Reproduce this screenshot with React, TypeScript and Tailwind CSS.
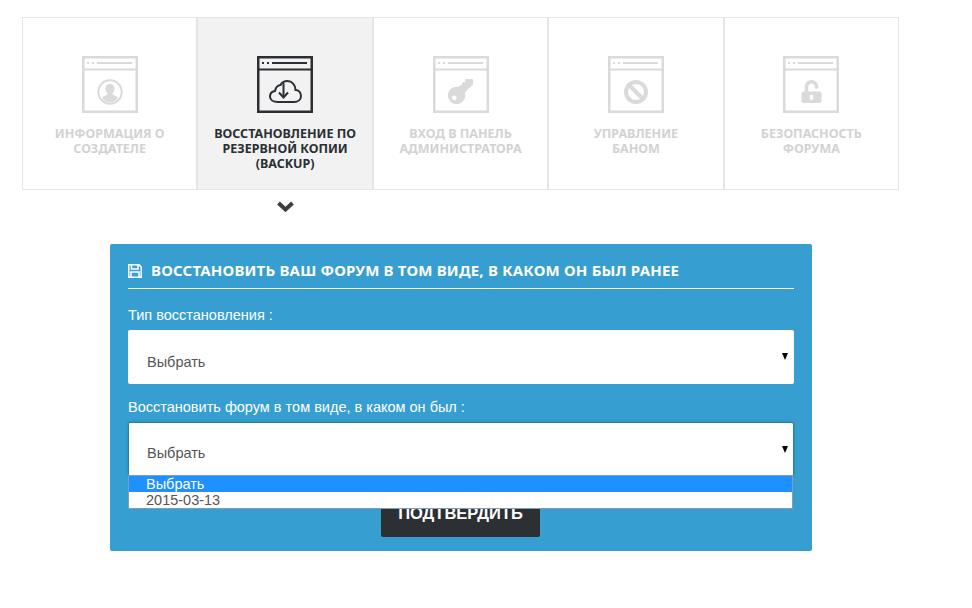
import React from 'react';
import { FaKey, FaUnlockAlt } from 'react-icons/fa';

const headingFont = "font-['Noto_Sans','DejaVu_Sans',sans-serif]";

// browser window frame shared by every step icon
const WindowIcon: React.FC<{ children: React.ReactNode; active?: boolean }> = ({ children, active }) => {
  const color = active ? '#2b2f33' : '#dadada';
  return (
    <div className="relative h-[57px] w-[56px]">
      <svg width="56" height="57" viewBox="0 0 56 57" fill="none">
        <rect x="1.25" y="1.25" width="53.5" height="54.5" stroke={color} strokeWidth="2.5" />
        <path d="M1 13.500H55" stroke={color} strokeWidth="2" />
        <path d="M5 7h2M10 7h2M15 7H50" stroke={color} strokeWidth="2" />
      </svg>
      <div className="absolute inset-x-0 top-[14px] bottom-0 flex items-center justify-center">{children}</div>
    </div>
  );
};

const UserCircle = () => (
  <svg width="26" height="26" viewBox="0 0 26 26">
    <circle cx="13" cy="13" r="11.700" fill="none" stroke="#dadada" strokeWidth="2" />
    <path
      d="M13 5c3 0 4.600 2.300 4.400 5-.1 1.600-.7 3-1.500 4-.5.7-.4 1.600.4 2 1.800.8 3.600 1.400 4.600 2.700A10.600 10.600 0 0 1 13 23.400a10.600 10.600 0 0 1-7.900-4.700c1-1.300 2.800-1.900 4.600-2.700.8-.4.900-1.300.4-2-.8-1-1.400-2.400-1.500-4C8.400 7.300 10 5 13 5z"
      fill="#dadada"
    />
  </svg>
);

const CloudDownload = () => (
  <svg width="33" height="23" viewBox="0 0 33 23" fill="none" stroke="#2b2f33" strokeWidth="2">
    <path d="M9 22H25C29 22 32 19.500 32 16C32 12.500 29.500 10 26.500 10C26.500 5 23 1 18.500 1C15 1 12.500 3 11.500 5C8.500 5.500 6.500 8 6 11C3 11.500 1 13.500 1 16.500C1 19.500 4 22 9 22Z" />
    <path d="M14.500 3V17" />
    <path d="M10 12.500L14.500 17.500L19 12.500" />
  </svg>
);

const BanIcon = () => (
  <svg width="24" height="24" viewBox="0 0 24 24" fill="none" stroke="#dadada" strokeWidth="4">
    <circle cx="12" cy="12" r="10" />
    <path d="M5 5L19 19" />
  </svg>
);

const SaveIcon = () => (
  <svg width="14" height="14" viewBox="0 0 14 14" fill="none" stroke="white" strokeWidth="1.500" className="mt-[3px] shrink-0">
    <path d="M.8.8H11L13.200 3V13.200H.8Z" />
    <path d="M3.500 1V5H10V1M3 13V8H11V13" />
  </svg>
);

const steps = [
  { title: ['ИНФОРМАЦИЯ О', 'СОЗДАТЕЛЕ'], icon: <UserCircle /> },
  { title: ['ВОССТАНОВЛЕНИЕ ПО', 'РЕЗЕРВНОЙ КОПИИ', '(BACKUP)'], icon: <CloudDownload />, active: true },
  { title: ['ВХОД В ПАНЕЛЬ', 'АДМИНИСТРАТОРА'], icon: <FaKey size={25} color="#dadada" className="rotate-180" /> },
  { title: ['УПРАВЛЕНИЕ', 'БАНОМ'], icon: <BanIcon /> },
  { title: ['БЕЗОПАСНОСТЬ', 'ФОРУМА'], icon: <FaUnlockAlt size={23} color="#dadada" /> },
];

const FakeSelect: React.FC<{ focused?: boolean }> = ({ focused }) => (
  <div
    className={`relative flex h-[54px] items-center rounded-[2px] bg-white text-[14.5px] text-[#555] ${
      focused ? 'border-t border-l border-r border-[#2a7fa8] pl-[18px] pt-[9px] shadow-[0_0_3px_#2a7fa8]' : 'pl-[19px] pt-[11px]'
    }`}
  >
    <span>Выбрать</span>
    <span
      className={`absolute top-[23px] h-0 w-0 border-x-[3.5px] border-t-[7px] border-x-transparent border-t-black ${
        focused ? 'right-[5px]' : 'right-[6px]'
      }`}
    />
  </div>
);

export default function App() {
  return (
    <div className="h-[608px] w-[972px] overflow-hidden bg-white pt-[17px] font-['Liberation_Sans',Arial,sans-serif]">
      <div className="ml-[22px] flex w-[877px]">
        {steps.map((step, i) => (
          <div
            key={i}
            className={`flex h-[173px] flex-1 flex-col items-center border border-[#e5e5e5] pt-[38px] ${
              step.active ? 'bg-[#f2f2f2]' : ''
            }`}
          >
            <WindowIcon active={step.active}>{step.icon}</WindowIcon>
            <div
              className={`mt-[13px] whitespace-nowrap text-center text-[12.5px] font-bold leading-[15px] ${headingFont} ${
                step.active ? 'text-[#2b2f33]' : 'text-[#d2d2d2]'
              }`}
            >
              {step.title.map((line) => (
                <div key={line}>{line}</div>
              ))}
            </div>
          </div>
        ))}
      </div>

      <div className="ml-[22px] flex w-[527px] justify-center pt-[11px]">
        <svg width="17" height="11" viewBox="0 0 17 11" fill="none" stroke="#3a3f44" strokeWidth="4">
          <path d="M1.500 2L8.500 8.500L15.500 2" />
        </svg>
      </div>

      <div className="ml-[110px] mt-[32px] h-[307px] w-[702px] rounded-[2px] bg-[#369ed0] px-[18px] pt-[17px] text-white">
        <div className={`flex h-[28px] items-start gap-[9px] border-b border-white text-[15px] font-bold tracking-[0.2px] ${headingFont}`}>
          <SaveIcon />
          <span className="leading-[18px]">ВОССТАНОВИТЬ ВАШ ФОРУМ В ТОМ ВИДЕ, В КАКОМ ОН БЫЛ РАНЕЕ</span>
        </div>

        <div className="mt-[16px] text-[14.5px] leading-[20px]">Тип восстановления :</div>
        <div className="mt-[5px]">
          <FakeSelect />
        </div>

        <div className="mt-[13px] text-[14.5px] leading-[20px]">Восстановить форум в том виде, в каком он был :</div>
        <div className="relative mt-[5px]">
          <FakeSelect focused />
          {/* native select popup, hangs over the submit button */}
          <div className="absolute left-0 right-[1px] top-[53px] z-10 border border-[#7f9db9] bg-white text-[14.5px] leading-[16px] text-[#555]">
            <div className="bg-[#1e90ff] pl-[17px] text-white">Выбрать</div>
            <div className="pl-[17px]">2015-03-13</div>
          </div>
        </div>

        <div className="mt-[14px] flex justify-center pr-px">
          <button className="h-[47px] w-[159px] rounded-[2px] bg-[#2d3033] text-[16.5px] font-bold text-white">ПОДТВЕРДИТЬ</button>
        </div>
      </div>
    </div>
  );
}
